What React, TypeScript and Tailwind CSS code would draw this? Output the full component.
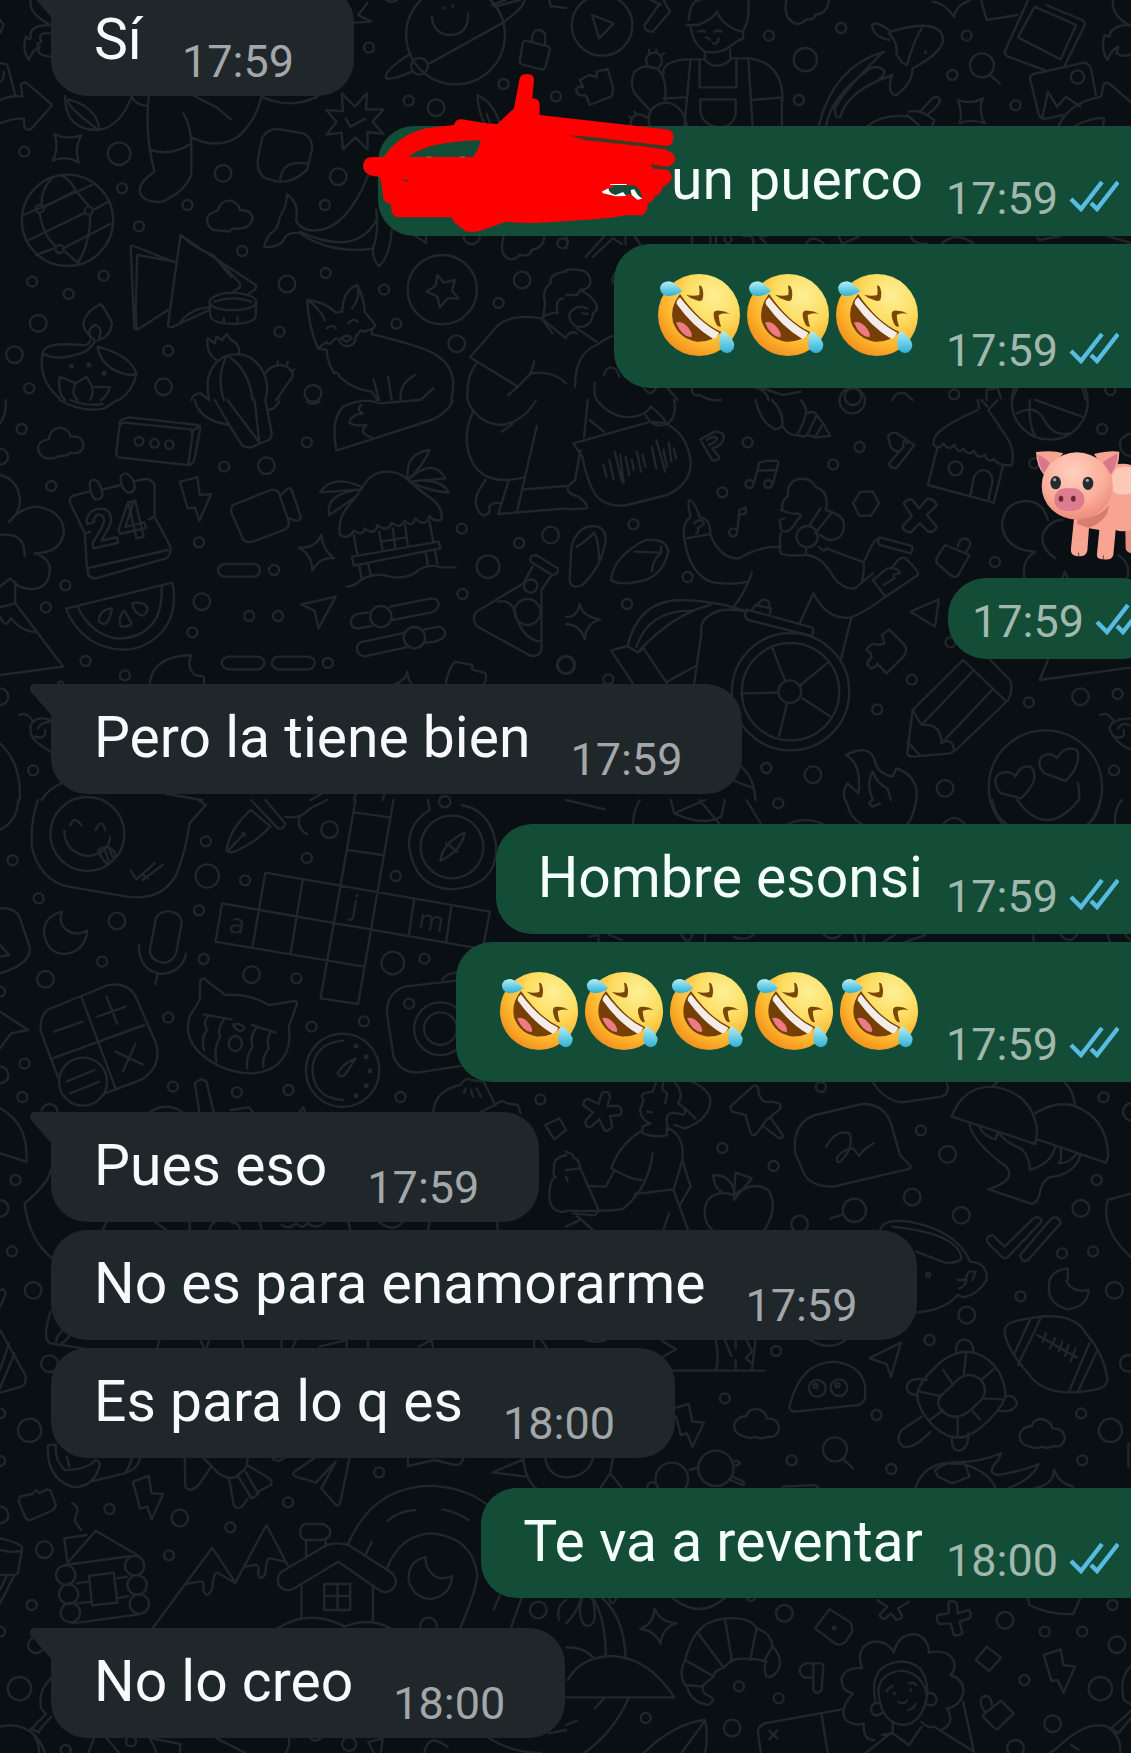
import type { ReactNode } from 'react'
import { clsx } from 'clsx'

type Dot = [x: number, y: number, r: number]

interface Sheet {
  x: number
  y: number
  dots: Dot[]
  lines: string
}

// The wallpaper is drawn in eight sheets, each on its own finer grid
const GRID_X = 2.77
const GRID_Y = 3

const sheets: Sheet[] = [
  {
    x: 0,
    y: 0,
    dots: [
      [1022, 143, 18], [1132, 302, 18], [1208, 323, 28], [1395, 252, 18], [1540, 289, 18], [67, 455, 18],
      [330, 461, 37], [338, 565, 18], [618, 520, 28], [519, 615, 18], [385, 679, 18], [937, 530, 28],
      [900, 615, 18], [671, 753, 18], [902, 819, 18], [795, 852, 28], [1064, 869, 18], [1098, 971, 18],
      [1265, 1031, 28], [89, 845, 18], [190, 882, 18], [287, 827, 18], [106, 970, 28], [40, 1064, 28],
      [81, 1165, 18], [453, 1160, 28], [466, 1052, 18], [774, 995, 18], [867, 1180, 28], [1446, 840, 28],
      [1381, 909, 18], [1558, 730, 18], [1307, 707, 28], [110, 626, 15], [246, 632, 15], [165, 747, 15],
      [187, 661, 140], [1262, 105, 151], [1162, 199, 28], [1225, 869, 107], [1228, 24, 5], [1254, 18, 5],
      [198, 1099, 7], [246, 1094, 7], [288, 1120, 7],
    ],
    lines: `M1196 50Q1200 105 1250 105Q1300 100 1296 40M1138 160Q1060 215 1070 235Q1090 240 1140 215M1190 190L1390 70Q1450 25 1453 0M1362 15L1400 0M1370 20L1440 0
M1454 122L1515 138Q1525 142 1523 150L1511 200Q1508 210 1498 208L1448 194Q1438 190 1440 180L1448 128ZM1474 122V108Q1480 88 1494 90Q1512 95 1510 112V132
M140 75Q80 75 85 110Q85 125 72 110Q60 150 80 180Q90 150 110 140Q95 165 140 170M140 100Q100 95 115 125Q95 130 110 140
M85 0Q78 40 140 75M0 60L10 75L0 100M0 190Q20 190 22 200L42 285M0 245Q12 240 10 215
M0 300Q30 285 62 290L58 255Q62 245 75 250L140 310Q145 316 138 324L85 388Q75 392 68 382L66 355Q30 355 0 370
M180 288Q180 390 270 390Q330 385 365 290M190 298Q265 320 275 385M190 298Q175 310 270 388
M412 288Q400 400 428 515Q380 550 388 580Q400 610 450 605Q520 570 530 520V440Q530 380 508 340M420 450Q470 470 528 432M530 412Q600 450 660 410Q710 360 724 290M538 288L600 322L640 358M725 290Q800 330 880 290M365 290Q375 315 408 318
M150 403Q185 420 225 406Q205 445 218 488Q185 465 146 482Q165 440 150 403Z
M947 280L983 320L1016 280L1014 328L1062 328L1032 365L1062 402L1018 396V448L984 412L950 448L946 398L904 404L932 366L904 330L950 334ZM958 355L970 380L1012 356
M770 387L840 400Q868 415 864 450L850 510Q810 550 770 545L735 535Q712 520 714 480L726 415Q740 385 770 387ZM776 540Q780 480 850 490
M1322 285Q1370 310 1385 375M1322 285Q1325 340 1345 375M1348 342L1358 372
M66 645L255 555M125 620L210 572L246 618M80 720L232 640M262 628L300 605M175 745L305 672M110 640Q120 710 155 738M115 612Q115 560 150 530M210 572Q190 530 165 525M250 648Q250 730 215 790M100 765L150 745M180 755L220 792
M590 690Q565 670 578 645Q590 635 603 632Q610 600 640 602Q662 610 664 630Q698 630 700 655Q690 690 655 685Q640 685 635 695Q605 690 590 690Z
M1020 525Q960 690 870 692Q830 690 820 660Q830 610 795 583Q795 620 775 650Q770 690 750 700Q735 720 732 740Q780 745 790 710Q805 695 830 700Q920 765 1035 745M830 695Q940 750 1000 710Q1030 690 1042 660M1042 628Q1050 700 1034 740Q1030 780 1050 798Q1080 770 1085 690M1150 708L1180 728V708
M362 742Q360 736 370 738L480 785M362 742L372 985Q375 992 385 986L465 930M380 765L483 785M380 765L376 930L378 985M500 706L708 855Q712 862 705 870L690 880M500 706L465 975Q468 985 480 980L580 930M505 708Q530 740 590 765L665 850V862L640 880M590 765L640 830M500 965Q530 925 578 922
M580 905Q590 880 645 878Q710 885 710 905Q705 930 645 930Q585 930 580 905ZM580 905L583 950Q590 970 645 972Q700 970 708 950L710 905M595 905Q645 885 697 905M620 955V968M658 952V965
M262 1020Q225 990 232 965Q240 930 280 912Q310 960 310 975Q305 1010 270 1022M250 1010Q240 985 265 975Q285 985 275 1015M250 1020Q245 1040 225 1035Q120 1025 118 1060Q150 1085 225 1060Q250 1050 262 1025M270 1040Q360 1065 378 1120Q370 1130 340 1120Q280 1100 270 1040M118 1060Q105 1140 165 1195M378 1120Q370 1170 330 1200M165 1130L210 1150L240 1130L255 1160L305 1162Q295 1190 280 1200M165 1130Q160 1180 180 1200M210 1150Q195 1180 215 1200M255 1160Q260 1180 250 1200
M600 1080Q570 1060 575 1015L595 1030L600 1010L615 1020L628 1002L640 1020Q665 1030 662 1060M580 1200Q560 1110 620 1070Q700 1040 735 1130Q745 1170 735 1200M625 1075Q600 1130 620 1200M635 1070Q690 1110 700 1200M735 1120Q750 1095 780 1095Q815 1105 810 1130L765 1200M768 1095L770 1085M795 1097L797 1085M808 1115L815 1108M530 1200Q535 1180 555 1180L580 1200
M880 1045Q850 960 852 900Q900 905 930 938L948 935Q950 870 990 855Q1010 900 1010 935L1040 975L1030 990V1003Q1180 1040 1215 1070Q1270 1110 1250 1200M852 900Q890 930 900 962M990 860Q1000 890 975 925M880 1045L905 1025Q910 1040 925 1020Q930 1010 940 1020Q945 1040 965 1038Q985 1035 985 1010L1000 990L1010 995L1035 985M905 985Q920 970 930 985M965 970Q980 950 990 965M945 1015Q960 1000 975 1015L960 1025ZM880 1045L905 1050Q905 1080 925 1120Q935 1110 940 1130Q980 1170 1030 1175L1045 1200M1035 1140L1050 1200M1075 1130L1085 1200M1110 1200Q1105 1150 1150 1125M1165 1200L1200 1165
M1530 1000L1500 955Q1420 940 1380 975L1302 1072L1435 1160L1470 1120L1480 1085M1320 1090Q1290 1130 1295 1200M1435 1160L1408 1185M1470 1120Q1530 1110 1568 1150
M1568 815Q1520 820 1525 850Q1500 870 1510 910L1505 950Q1530 935 1545 940Q1535 900 1560 895M1500 955L1568 1015
M1212 826L1230 848L1260 840L1252 872L1270 895L1240 895L1218 922L1212 890L1182 875L1206 858Z
M1018 8L992 45L1028 65L980 68M1522 0L1525 18L1568 24M1070 0Q1085 10 1100 0M1395 710Q1380 770 1415 778Q1430 778 1438 765Q1470 770 1472 750Q1505 745 1508 710`,
  },
  {
    x: 566,
    y: 0,
    dots: [
      [100, 76, 94], [562, 107, 18], [663, 179, 38], [762, 84, 18], [1110, 107, 18], [1070, 225, 18],
      [645, 300, 18], [1245, 316, 18], [1152, 196, 39], [1417, 231, 23], [996, 157, 5], [1075, 1183, 18],
      [795, 1190, 28], [1508, 1170, 18], [244, 182, 27],
    ],
    lines: `M72 45L132 70L92 115Z
M218 75L260 10M240 95L288 35L270 0M218 75Q215 95 240 95M235 0L262 15
M340 60Q345 0 370 0M505 0Q510 60 490 95M333 75H365Q405 60 418 35Q440 85 490 95M345 80Q350 130 385 155Q430 165 465 130L480 120Q495 120 490 95M365 95Q375 90 385 95M410 95Q420 88 430 95M388 112Q400 115 398 120M408 130Q420 135 423 115M385 158V180Q415 215 455 180V150M385 178H330Q265 185 270 220M455 175H510Q600 190 600 300M345 178L328 378M370 182V262H472V178M505 180L517 378M372 298H470V340Q465 380 425 382Q375 375 372 330ZM270 295L330 292M515 300L600 292M598 300V378
M232 330L190 280Q175 245 190 215Q215 190 250 205Q280 225 275 300M230 345Q240 310 280 308Q325 315 335 378M232 378Q225 355 232 340M178 378Q180 345 200 342Q215 345 228 355M232 160L230 150M250 155V148M265 165L272 160M175 350L182 355M190 335L195 345
M65 225L85 232V215L115 207L130 260Q132 280 125 290L65 315L55 285Q30 290 28 270Q32 255 48 262L38 240Z
M610 0Q600 60 640 72Q655 70 665 58Q690 60 690 45Q725 40 728 0
M895 120Q850 110 848 75Q860 60 900 95Q1040 50 1045 120Q1040 160 960 205Q960 250 915 285Q890 285 900 235L905 225Q780 270 760 350Q745 360 745 325Q770 270 880 155Q740 200 700 378M720 378Q735 290 830 215Q860 190 880 210Q885 225 870 235M895 100Q920 130 915 160Q930 195 945 195Q960 130 985 85
M1015 5Q1050 10 1075 50Q1080 15 1120 0M1150 0L1165 60L1250 45
M1280 0L1215 155Q1215 165 1225 170L1325 210M1380 200L1437 75Q1437 65 1430 60L1330 15M1298 20L1413 75L1370 178L1252 112ZM1285 235Q1285 225 1295 222L1435 188Q1450 190 1455 210L1468 285M1285 235L1310 345Q1315 360 1335 355L1375 345M1320 350L1335 275L1360 320L1385 290L1425 320
M1365 378Q1390 310 1482 290L1490 250Q1500 245 1510 255L1568 310M1410 378Q1460 350 1490 355L1488 378M1178 228L1202 250
M1085 300Q1120 315 1155 295Q1140 330 1160 370Q1120 355 1090 370Q1100 340 1085 300Z
M835 378Q880 340 950 350M950 335Q980 325 1020 360L1015 378M945 345L980 378M985 330L1015 295Q1030 285 1037 300Q1035 315 1000 345
M1560 75Q1510 75 1505 110L1492 105Q1480 150 1500 180Q1510 150 1530 140L1525 160Q1550 175 1568 160M1515 0Q1510 50 1568 80
M55 770L105 710M75 770L130 715L155 732M165 708V732M190 708L205 732M350 708Q345 720 350 732M400 708V732M415 708V732M440 710Q435 725 450 730Q465 720 455 710M490 708H515L520 732M555 708H535L555 732M665 732Q680 700 715 732M755 708L765 732L810 710M955 708Q960 732 1000 732M1040 732Q1080 690 1130 732M1305 708L1310 720L1370 708M1500 708L1568 730M0 710Q10 720 0 745
M0 810Q70 800 68 850Q60 870 40 870L30 885H0M40 870Q90 900 85 930L75 940Q70 985 30 980Q5 965 10 940Q30 910 60 925M45 940L60 942M30 985L85 1025M25 1160Q25 1060 85 1035Q130 1000 140 1010M0 1010Q15 990 30 1000M105 1125Q115 1090 140 1110L148 1130M85 1200Q75 1180 80 1150M130 850Q125 830 135 820
M215 1163Q235 1195 250 1163M280 1163L310 1200M350 1163Q345 1190 370 1185Q400 1205 430 1200M525 1163Q560 1175 560 1200M540 1163L600 1185L650 1175M905 1200Q910 1175 940 1180L960 1200M1165 1200V1170L1195 1163L1205 1195M1235 1200Q1245 1175 1250 1163M1430 1163L1440 1200`,
  },
  {
    x: 0,
    y: 400,
    dots: [
      [60, 87, 18], [142, 258, 18], [621, 200, 18], [738, 197, 28], [850, 127, 18], [551, 427, 18],
      [759, 510, 18], [181, 556, 18], [127, 622, 18], [559, 605, 28], [533, 697, 18], [690, 648, 18],
      [770, 648, 18], [237, 783, 18], [346, 826, 18], [908, 789, 18], [1279, 386, 18], [1438, 429, 18],
      [1525, 405, 28], [1352, 500, 37], [1281, 582, 18], [385, 124, 16], [428, 130, 16], [469, 134, 16],
      [92, 1111, 18], [0, 170, 27], [0, 890, 28], [1568, 795, 30], [1055, 650, 35], [1148, 713, 35],
      [1470, 558, 23], [1461, 636, 42], [168, 852, 10],
    ],
    lines: `M15 0Q20 40 0 70M165 0Q230 40 290 25L325 0M195 0Q240 20 285 12
M130 175Q100 165 107 135Q115 120 135 118Q140 85 165 83Q195 90 195 110Q230 105 231 135Q228 165 195 158Q185 170 165 168Q150 178 130 175Z
M330 70Q335 55 360 52L548 75Q557 80 553 95L540 170Q535 195 520 195L330 172Q320 168 322 158L330 85Q332 68 345 68L530 88Q535 90 533 105L522 190M530 95L553 78
M540 0Q550 60 635 75L595 0M630 0L720 130M635 75L670 135Q690 150 710 135L745 120Q755 110 752 95L735 0M705 0L718 125M775 0Q765 25 745 30M850 5Q865 18 885 5
M932 152Q915 60 950 20Q1010 -10 1050 10L1160 0M932 152L1195 60Q1240 40 1255 0M1000 15Q985 30 1005 40Q970 45 968 68Q980 80 1015 75Q990 100 1030 112
M1295 0Q1320 70 1390 75Q1450 65 1485 0M1390 95L1420 72M1310 35Q1275 120 1310 190Q1350 260 1450 232M1487 78L1432 335M1408 245L1380 342L1568 325M1450 268L1568 258M1345 240Q1310 290 1320 320Q1330 350 1345 345Q1360 340 1355 320Q1365 305 1385 310
M245 275L200 288Q190 295 195 310L235 400L240 490L245 525Q255 540 275 532L460 475Q475 465 472 440L428 350V255Q420 235 400 237L375 243M280 270L335 255M235 400L250 395M412 358L428 350M240 505L465 450M250 265Q245 240 260 238Q280 245 284 285Q280 300 265 298Q252 290 250 265ZM335 245Q330 222 348 220Q368 225 374 262Q370 278 355 278Q340 270 335 245Z
M498 245L547 232L553 285L585 282L552 362L540 322L520 325Z
M645 315L750 270Q765 267 772 278L800 365Q802 380 790 388L700 425Q680 430 672 415L640 335Q640 320 645 315ZM778 285L798 265Q805 262 808 270L833 350Q833 362 820 362L800 355
M890 405Q895 450 925 475Q885 470 865 512Q865 465 828 443Q875 445 890 405Z
M1005 260Q1030 215 1070 215Q1110 215 1130 240Q1160 270 1200 300Q1230 330 1222 360Q1200 365 1190 348Q1180 385 1150 355Q1145 385 1120 362Q1110 390 1085 368Q1075 400 1045 375Q1040 410 1010 385Q1005 410 980 392Q965 420 942 405Q935 360 960 325Q985 295 1005 260M1005 262Q920 220 887 277L1000 268Q900 280 912 345Q960 310 985 290M1130 240Q1120 160 1190 150Q1170 200 1130 240Q1200 170 1233 235L1135 245Q1220 230 1243 278Q1190 275 1135 245M980 405L990 465M1190 365L1200 425M975 470L1215 425L1220 445L980 497ZM1050 395L1060 450M1122 375L1130 440M1088 385L1095 445M1055 425L1125 412M995 497L1002 535M1020 492L1027 525M1180 460L1185 495M1205 455L1212 492M960 560Q980 560 1000 540Q1040 515 1080 530Q1130 540 1160 510Q1190 490 1220 502H1262
M622 492H705Q720 495 720 510Q718 528 705 530H620Q604 525 604 510Q606 495 622 492ZM632 770H715Q733 775 733 789Q730 805 715 808H632Q614 802 614 789Q616 773 632 770ZM770 770H855Q872 775 872 789Q870 805 855 808H770Q753 802 753 789Q755 773 770 770Z
M183 626L478 548Q500 680 400 735Q330 770 250 720Q200 680 183 626ZM215 620Q250 700 320 715Q400 720 435 650Q450 610 448 558M305 625Q270 635 275 665Q300 690 310 625M342 632Q325 660 335 680Q370 680 362 665Q350 640 342 632M367 610Q370 640 395 647Q420 630 400 612Q380 605 367 610
M835 613L930 590L882 685L872 633Z
M1020 637L990 642Q970 650 972 670Q978 690 1000 684L1028 678M1080 620L1195 595Q1215 595 1215 615Q1212 632 1195 637L1088 660M1115 700L1005 725Q985 730 990 755Q1000 772 1015 768L1125 742M1175 688L1215 680Q1235 685 1233 705Q1225 725 1180 728
M1470 485Q1465 465 1485 465L1545 505Q1548 525 1530 525ZM1475 500L1450 550L1320 635Q1305 655 1320 678L1465 765Q1490 775 1500 750V570L1528 525M1380 605Q1420 595 1430 650Q1450 720 1500 725
M0 225Q55 240 55 310Q50 345 25 365Q60 320 105 320Q175 335 177 395Q170 460 95 460Q145 475 137 520Q130 570 80 567Q50 565 28 535L0 560M0 405Q70 395 68 468M42 545V610L175 800L0 825M42 610L0 622M0 650Q15 690 30 655Q60 695 98 697
M415 852Q420 770 530 765Q515 800 540 825L565 830V852M1095 852Q1125 840 1128 815Q1130 840 1140 852M1235 852Q1240 810 1260 785L1308 795V808L1345 820Q1350 840 1340 852
M52 945Q75 935 88 960M140 960Q100 945 85 975Q80 1010 105 1030L140 1055M105 985Q115 965 140 965M95 1010Q130 1020 125 990M0 1030Q60 1090 55 1200M115 1200Q135 1165 170 1150M460 1182L560 1200M860 1200L890 1182M980 1200L985 1182M1060 1200L1065 1182`,
  },
  {
    x: 566,
    y: 400,
    dots: [
      [503, 127, 18], [433, 277, 18], [187, 373, 18], [169, 612, 18], [337, 531, 18], [813, 141, 18],
      [740, 193, 18], [1079, 205, 24], [1188, 486, 18], [958, 839, 18], [862, 928, 18], [555, 1104, 18],
      [684, 1124, 28], [1050, 1165, 28], [1282, 907, 18], [1425, 890, 28], [1528, 882, 18], [1485, 87, 18],
      [117, 838, 18], [0, 795, 28], [1297, 190, 18], [620, 875, 37], [622, 875, 179], [622, 875, 149],
      [668, 410, 35], [1065, 727, 18], [1518, 1111, 18], [1340, 5, 117], [1328, 1161, 173], [793, 2, 41],
      [508, 252, 15], [560, 252, 15], [463, 397, 15],
    ],
    lines: `M60 0Q55 60 50 110M20 130L45 170Q60 250 85 290Q120 325 170 315L280 285Q350 250 345 180Q335 100 275 70L235 65L20 130M65 60L105 95M85 0Q130 60 190 50Q220 45 235 20M300 0Q310 70 260 77Q235 75 220 45M235 20Q270 50 275 65
M104 195L112 232M120 180L132 238M135 155L155 245M150 165L160 250M165 170L175 225M182 178L188 210M196 155L208 215M212 165L220 200M238 142L250 205M250 120L275 215M270 150L280 200M285 128L292 185M298 145L305 175
M40 150L25 240L5 260Q0 280 35 290Q60 310 58 325L0 328
M372 118L412 95Q440 95 437 115Q430 140 405 145L425 172Q420 185 405 180L375 125M390 120Q410 105 418 115Q420 125 395 135
M525 0Q540 70 580 88Q600 85 600 70Q600 30 570 0M600 80Q620 110 640 105Q665 60 665 30Q660 10 650 0M640 105Q665 115 670 100L695 45Q690 30 668 40M670 105L690 112L712 70L698 50M690 112L732 108L712 70
M520 250L535 190Q540 182 585 182L588 190L573 250M530 212L585 210M475 390L480 330L498 322V340L480 345
M895 120Q885 100 915 98L930 110L965 135L915 205Q895 205 895 190L935 140Q930 115 945 130M895 120Q895 150 920 155
M815 275H850L867 310L845 347H812L795 310Z
M935 310Q945 295 960 300L978 325L1000 297Q1020 295 1027 315L1000 345L1027 380Q1020 400 1003 395L980 370L955 397Q935 395 932 380L958 348Z
M1140 30Q1060 70 1040 90Q1015 110 1018 135Q1035 150 1045 130Q1060 155 1075 135Q1090 165 1100 145Q1115 170 1130 152Q1140 180 1160 165Q1170 190 1185 178Q1200 200 1235 195Q1245 150 1220 110L1170 30M1030 140L1002 255L1185 308L1210 200M1120 290L1130 230Q1145 205 1165 212Q1185 225 1180 250L1170 300M1140 0L1145 25M1195 0L1170 30M1150 0L1168 20
M1285 0Q1280 70 1300 110M1300 0L1430 50M1250 40Q1300 10 1325 60Q1350 110 1390 100M1568 100Q1530 110 1535 140Q1540 165 1568 170
M1335 360Q1320 300 1270 303Q1210 310 1208 380Q1220 450 1300 455Q1260 480 1270 534M1355 475Q1310 440 1322 400Q1340 360 1375 360M1375 534L1382 515L1390 534M1530 465Q1565 490 1555 534
M15 440Q30 380 75 378Q110 380 110 420Q100 500 45 555Q15 570 10 540ZM30 440Q60 420 78 398Q90 420 92 480M125 540Q130 470 220 420Q280 415 283 455Q270 520 220 540Q150 560 125 540ZM190 455L263 458Q240 480 238 515M263 440V458
M328 420Q320 370 345 350Q335 305 342 300Q360 310 370 352Q400 355 400 400M335 415L395 403M355 370Q375 350 382 372L365 385Q370 395 360 400M328 420Q345 530 410 548Q470 555 500 545M400 405Q430 480 480 475Q530 440 590 440M515 518Q500 570 462 625M590 440L595 460Q610 470 665 465M668 465Q710 470 740 530Q770 570 800 565L850 520M665 445V465M595 440Q590 420 595 400M600 330Q595 300 615 290Q610 250 640 238Q680 230 690 260Q730 275 720 325M595 330Q630 345 640 340Q660 345 640 360Q630 385 610 395Q590 395 595 375Q585 360 605 355M705 325L675 375M735 340L690 400M720 330Q770 345 770 375Q770 415 735 420Q720 420 705 405M700 440Q715 460 720 445L820 485Q830 490 820 545M825 485L850 430Q860 415 870 412L955 437Q965 440 955 460L870 435Q860 430 868 415M850 540L885 590L975 525Q980 515 940 475Q930 470 920 480L905 500M850 540L890 505Q920 500 925 520Q900 520 910 535L880 555M885 590Q800 660 770 653Q720 650 685 580L648 668M790 655L762 775
M0 650Q30 655 38 612Q45 650 95 658Q55 670 52 718Q40 675 0 672
M500 628L680 682Q690 690 680 708L505 660Q490 650 500 628ZM515 630L525 615L568 625L565 640M530 615Q540 595 555 600Q570 610 560 625M500 635Q430 620 400 645Q370 660 375 700L355 850M170 740Q200 600 320 600Q430 605 500 635M195 740Q230 630 350 632M200 755Q300 640 400 615M125 752L170 738L200 758L215 745M125 752L185 850M215 745L280 850M280 845L360 798
M572 745L608 845M725 788L650 855M735 952L655 895M590 1008L612 910M485 880L588 878
M1033 598L955 635L1022 680Z
M865 735Q845 725 832 750Q850 760 845 775Q825 790 845 805Q865 800 862 790L888 820L935 770Q948 750 938 735L895 688L875 705L882 730Z
M1050 435L1118 465L1085 528Q1075 535 1065 525L1028 490Q1022 480 1030 468ZM1085 440Q1090 415 1105 415Q1125 420 1118 440L1105 460
M1100 780L960 930L945 1062Q950 1070 960 1070L1065 1060L1080 1050L1225 900Q1240 870 1230 840L1175 780M1130 810L985 975L960 930M1180 870L1040 1030Q1040 970 985 975M1040 1030Q1070 1010 1075 1050M1100 780L1220 905M945 1025L980 1065M1335 780L1312 840L1568 802
M775 1065Q840 1030 855 1080Q860 1120 905 1130L915 1105Q980 1130 970 1200M775 1065Q820 1090 810 1180L780 1150Q765 1170 772 1200M850 1200Q830 1150 850 1115Q860 1150 890 1165L900 1200
M1245 1130Q1260 1090 1290 1103Q1315 1140 1260 1195L1205 1180Q1180 1150 1195 1125Q1225 1105 1245 1130ZM1360 1075Q1380 1035 1415 1050Q1430 1090 1385 1143L1325 1120Q1300 1090 1320 1068Q1345 1055 1360 1075ZM1418 1150Q1425 1180 1420 1200
M1480 945Q1500 935 1515 960M1568 955Q1510 955 1505 985Q1520 1030 1568 1050M1530 985Q1540 965 1560 975M1520 1010Q1550 1020 1545 990M485 1100Q520 1130 525 1200M460 1140L520 1165`,
  },
  {
    x: 0,
    y: 800,
    dots: [
      [242, 102, 114], [35, 181, 18], [107, 295, 18], [324, 363, 28], [574, 228, 38], [570, 124, 18],
      [679, 241, 18], [850, 174, 18], [913, 89, 28], [1096, 228, 18], [551, 331, 18], [564, 477, 18],
      [283, 485, 18], [126, 538, 28], [697, 524, 28], [821, 535, 18], [1088, 489, 37], [1176, 476, 18],
      [466, 653, 18], [863, 680, 18], [1008, 664, 18], [68, 791, 18], [62, 891, 18], [479, 860, 18],
      [656, 877, 18], [799, 870, 18], [1109, 891, 18], [1133, 611, 18], [1497, 898, 18], [0, 575, 18],
      [0, 825, 28], [43, 1140, 18], [0, 1225, 28], [33, 1354, 18], [949, 811, 113], [1220, 686, 82],
      [1220, 686, 52], [1252, 141, 97], [230, 845, 75], [986, 738, 7], [1014, 770, 7], [1025, 812, 7],
      [1014, 857, 7], [986, 887, 7], [1232, 5, 20], [675, 103, 7],
    ],
    lines: `M1190 30Q1130 70 1133 140Q1150 265 1252 268Q1370 260 1375 150Q1370 60 1310 25M1190 30L1185 0M1280 15L1310 25M1287 98Q1280 150 1220 183Q1225 130 1287 98ZM1235 130L1268 155
M195 75Q205 45 225 75M265 90Q280 50 292 90M178 92Q180 160 245 168Q300 160 305 112M272 150Q300 130 320 160Q320 185 295 190Q280 175 272 150M290 148L300 180M300 140L312 170
M105 0Q85 60 88 140Q110 240 190 260L350 290Q450 305 490 220Q515 150 525 70L570 15L550 0M362 212L378 238L428 190M395 240L450 195M398 225L410 235M0 90Q50 60 50 0
M695 30Q640 80 627 150Q635 160 650 155Q720 120 748 78M630 155L672 105M695 0L770 85Q785 90 790 70L735 0M695 30L750 80M790 50Q830 60 860 25L905 0M830 50Q820 85 850 102
M985 0L888 595L992 612L1090 0M985 38L1080 52M963 150L1060 165M735 218L1357 335M615 310L1310 442M597 425L1008 500M615 310L597 425M735 218L700 437M838 243L805 460M1147 300L1132 408M1250 322L1235 430M1357 335L1340 430
M172 335Q120 350 122 400Q130 460 180 462Q235 455 242 392Q210 410 185 390Q160 370 172 335Z
M432 355Q445 330 475 335Q505 345 503 370L488 460Q475 490 450 488Q415 480 415 450ZM385 435Q385 515 450 522Q505 515 515 462M437 522L430 552
M0 325Q50 320 60 370L82 440Q90 490 0 520M0 435L25 465L0 470M0 635L78 690L30 700L0 745
M130 630L300 555Q360 545 380 600L432 730Q450 800 390 840L290 880M130 630Q105 660 115 700L160 830M225 590L320 865M145 775L400 675M270 650L348 620M295 590L325 672M150 695L228 665M320 755L395 793M375 732L340 815M185 845L262 810M195 880L275 845
M553 600L555 540Q565 530 575 545L625 585Q690 580 745 615L815 603Q825 605 822 615L800 680Q810 760 760 800Q700 840 610 800Q500 740 525 650ZM565 643L640 658M698 675L763 698M575 650Q560 670 575 690Q555 710 565 750M620 660Q600 690 610 710Q590 750 600 785M710 685Q690 710 700 740Q680 770 685 805M750 695Q735 720 745 745Q725 770 730 800M645 675Q665 665 678 685Q665 705 645 675M655 708Q630 710 635 740Q655 770 670 735Q672 715 655 708
M950 722Q870 730 865 810Q870 895 950 900M985 775Q950 790 935 820Q940 835 955 825Z
M1265 542L1120 560Q1070 580 1072 640L1090 770Q1110 820 1160 817L1275 798M1225 540Q1235 520 1265 518
M540 850Q555 830 572 845L592 936M540 850L552 936M115 930Q130 900 155 920L160 936M415 936Q460 905 505 936M640 930L690 922L700 936M830 936L840 922L845 936M1200 936Q1205 870 1275 855Q1290 830 1305 840L1340 845L1372 915M1372 915Q1390 895 1405 910L1435 915L1442 940M1372 915L1330 936M1290 865L1285 880M1305 870L1310 890M1320 865L1332 890
M0 925Q80 970 73 1085L0 1060M140 1110Q135 1150 68 1210Q80 1320 145 1375
M1510 975L1550 955L1568 990L1535 1018ZM1568 1065Q1530 1075 1535 1100Q1530 1130 1540 1130Q1520 1140 1522 1200Q1530 1240 1568 1235
M285 1290L295 1266M430 1266L460 1290M525 1266V1290M580 1290Q585 1270 595 1266M640 1266Q665 1270 665 1290M720 1266L725 1290M780 1275Q800 1290 820 1270Q840 1290 850 1270Q880 1290 900 1266M965 1266L970 1290M1050 1266Q1090 1300 1115 1266M1185 1290L1190 1266M1378 1290V1266`,
  },
  {
    x: 566,
    y: 800,
    dots: [
      [588, 10, 18], [706, 861, 18], [983, 991, 18], [433, 1044, 18], [575, 1098, 18], [1057, 1063, 28],
      [959, 1191, 28], [1095, 1246, 28], [1426, 1225, 28], [1470, 1140, 18], [1374, 1360, 18], [1460, 1354, 18],
      [1489, 892, 18], [799, 1231, 38], [1003, 1425, 9], [1568, 935, 30], [647, 1272, 28],
    ],
    lines: `M0 0L108 28M185 72Q190 20 205 0M290 0L300 40L385 0M300 40Q380 80 430 50L440 0M500 0L540 72M370 0L425 72M775 0Q790 60 820 72M850 0Q830 10 850 20L870 10M970 0Q960 60 945 72M1180 0Q1190 50 1220 72M1250 0Q1330 120 1420 0M1480 0Q1475 50 1445 72M1520 72Q1520 20 1540 0M615 72Q660 50 710 70M1045 72Q1075 35 1105 72
M65 410L90 405V426M120 405L155 420M320 405Q340 440 350 405M385 405V426M465 410Q490 425 520 405M715 405Q740 425 760 405M800 405L805 426M825 426V405M880 426L910 405M940 426L995 405M1295 405V426M1370 405Q1395 435 1415 405M1500 405Q1505 426 1510 426M1550 405L1568 426
M100 878Q120 870 122 890L115 918L145 918Q160 930 150 945L122 948L128 980Q115 1000 105 988L92 958L70 980Q50 985 55 960L75 938L48 915Q50 890 68 900L90 912Z
M250 846L240 875L215 880Q205 890 215 900L205 930Q210 965 235 970L212 980V1000Q250 1015 280 1005L278 985M300 846Q330 880 310 910Q340 930 325 945Q290 930 280 950Q275 970 285 990M270 850Q260 870 280 880L275 910M350 846Q400 870 400 905Q395 960 330 985L300 975M330 925L358 955M225 935L238 937M212 990Q150 1030 125 1105L135 1110Q180 1140 210 1140M285 985Q330 1010 322 1080L298 1170L338 1290M240 1060Q230 1160 160 1225Q140 1235 0 1232M190 1182L298 1168M322 1080L345 1160L315 1215M135 1110L110 1160L60 1158M40 1105L90 1230Q85 1250 70 1245L20 1240M0 1055Q20 1060 20 1072Q40 1080 38 1105L0 1110M0 1130L5 1145M285 1240L270 1290M30 1248L75 1290M0 1280L35 1262
M455 920L520 857Q530 855 532 865L535 885Q545 912 570 905L590 910Q598 920 590 930L555 960L525 1005Q515 1005 512 1000L497 945L460 935ZM548 980L590 1015Q600 1015 600 1005L568 955
M465 1185Q410 1165 388 1210Q375 1260 405 1290M465 1185Q520 1140 560 1170Q590 1220 550 1290M465 1200Q465 1180 470 1118L515 1135L465 1200M465 1170Q455 1125 408 1125Q410 1165 430 1175
M690 945L820 912Q880 910 900 970L925 1065L955 1098Q955 1108 945 1108L740 1160Q670 1160 655 1110L635 1060Q625 970 690 945ZM720 1040Q750 985 785 1000Q800 1040 760 1085Q745 1090 752 1070Q770 1045 795 1045L812 1068Q820 1050 852 1030
M850 846Q880 900 930 907L1040 890Q1065 880 1055 850
M1068 950Q1100 860 1180 860Q1290 875 1305 990L1300 1032L1068 950ZM1300 940Q1350 905 1400 915Q1500 950 1502 1070L1495 1088L1305 1018M1118 975Q1130 1030 1220 1100Q1250 1140 1170 1168L1285 1210Q1300 1215 1310 1190Q1320 1130 1350 1130Q1410 1120 1425 1065M1200 1000Q1220 1030 1260 1045Q1285 1070 1285 1110Q1345 1090 1355 1040M1145 982Q1160 1010 1190 1018L1195 1000M1370 1045Q1375 1075 1365 1090Q1395 1090 1415 1060M1180 860L1195 846M1380 846Q1405 870 1410 915
M767 1243L732 1256M1170 1310Q1185 1300 1195 1320L1215 1340L1295 1255Q1315 1245 1317 1265L1225 1370Q1215 1380 1205 1368L1170 1330Q1162 1318 1170 1310ZM1258 1365L1345 1255Q1365 1245 1370 1270L1280 1380Q1262 1390 1258 1365Z
M870 1290Q880 1255 950 1265Q1080 1290 1120 1385Q1170 1390 1165 1440M905 1280Q1080 1300 1095 1370Q1095 1390 1050 1388L970 1355M1105 1440L1115 1415H1135L1125 1440M1340 1440Q1350 1410 1390 1405V1440M1568 1180L1500 1200Q1480 1290 1568 1375`,
  },
  {
    x: 0,
    y: 1280,
    dots: [
      [92, 31, 28], [137, 251, 28], [82, 451, 38], [0, 400, 18], [0, 543, 18], [303, 687, 18],
      [498, 714, 28], [638, 742, 18], [798, 667, 18], [1050, 577, 18], [468, 826, 18], [123, 809, 28],
      [88, 975, 18], [0, 1055, 18], [54, 1226, 38], [1187, 1038, 28], [1491, 990, 28], [0, 705, 28],
      [363, 1384, 18], [182, 1410, 18], [967, 1392, 24], [100, 1095, 27], [182, 885, 32], [190, 943, 32],
      [195, 998, 32], [373, 857, 32], [380, 915, 32], [386, 972, 32],
    ],
    lines: `M0 30Q30 20 0 80M0 150L70 285Q75 310 60 320L0 338M25 190L0 270M40 220L0 325M140 95Q115 180 140 190L230 205M155 185Q165 140 195 155Q190 180 170 190
M135 495H155Q150 540 180 570Q240 570 265 540Q280 545 275 560Q260 620 205 622Q130 600 132 500ZM185 530L192 560M250 605L345 580Q380 570 388 535M345 580Q360 560 365 535
M55 650L90 642L100 630L108 640L130 628L140 632L155 675L148 690L85 720Q75 722 70 712L52 665Z
M368 605L412 588L420 640L452 642L420 718L408 680L388 685Z
M512 535L513 620Q525 640 550 615L585 560M565 535L600 575Q640 610 665 580Q690 560 685 535M635 600L648 675Q655 690 670 680L685 658M658 588Q690 640 695 655Q710 650 715 640L680 575M685 555L745 595Q757 605 750 615L715 635M755 535Q770 550 785 535
M870 535L815 575Q808 585 820 590L875 608L930 545L890 625L930 675Q940 680 943 665L968 535
M1130 535V558L1205 540L1260 555Q1280 555 1283 535M1365 577L1450 538M1365 577L1455 590M1450 535Q1455 600 1485 624M1510 535Q1520 590 1568 592
M200 670Q215 675 215 695Q200 720 215 735L225 750M188 855L178 775L240 765M190 845L265 752L380 825M180 855L365 828M212 910L245 905M325 895L352 890M215 970L255 965M325 955L355 948M200 1030L385 1003M247 888L315 878L325 968L255 976Z
M0 775Q60 790 62 805L50 875Q50 882 40 885H0M0 810Q30 820 60 812M40 885L0 970M20 885L0 930
M423 1044L588 803L652 908L738 735L800 862M515 912L550 905Q570 900 562 930Q575 960 588 925Q592 870 605 880L650 908M680 860L705 855Q720 850 715 885Q725 905 735 880Q738 830 750 835L790 845
M780 875L905 795Q935 785 965 795L1085 878Q1105 900 1090 925Q1070 945 1050 930L937 845L815 925Q790 940 772 915Q765 890 780 875ZM835 920V1015M1033 920V1025M848 835V780M902 800V778M848 780Q828 775 832 750Q835 732 850 732H895Q915 740 915 760Q910 778 890 780ZM898 912H970V990H898ZM935 912V990M898 948H970M770 1044Q860 985 955 1040Q1020 1010 1080 1044
M963 795Q1030 620 1195 617Q1300 625 1355 680M1075 722Q1100 695 1150 690M1225 688Q1265 695 1298 720M1072 865Q1110 760 1200 760Q1310 775 1322 885Q1320 930 1275 1044M1012 825L1030 785M1385 945L1368 988M1445 953L1415 1044
M1180 832Q1130 840 1132 900Q1145 955 1195 957Q1250 945 1252 888Q1215 905 1195 880Q1175 855 1180 832Z
M140 1195Q110 1230 112 1265Q110 1290 128 1300L85 1350M142 1310L105 1355M85 1345L108 1358M0 1340Q60 1325 100 1370Q115 1390 125 1419M90 1358Q110 1390 108 1419M260 1375L245 1419M295 1375L330 1419M420 1375L500 1392L498 1419M415 1375L435 1419M600 1375L680 1419M800 1375Q805 1400 790 1419M860 1375Q870 1390 890 1375M1025 1385L1060 1375L1055 1419M1020 1385L1035 1419M1175 1419Q1185 1370 1215 1385L1240 1400M1355 1375Q1420 1419 1500 1419M1568 1350L1520 1360M1548 1019Q1540 980 1568 960
M435 204L442 180M555 180L565 204M572 204L580 180M670 180L675 204M780 204V180M810 204L820 180M885 200L960 180V204M1020 180V204M1160 200L1195 180L1200 204M1480 204V180M1500 180L1515 204`,
  },
  {
    x: 566,
    y: 1280,
    dots: [
      [1259, 49, 18], [1110, 105, 28], [1519, 31, 28], [1007, 180, 18], [582, 213, 18], [440, 355, 18],
      [860, 405, 18], [1427, 400, 18], [1508, 451, 38], [625, 541, 18], [901, 567, 18], [1430, 541, 18],
      [745, 508, 39], [696, 325, 28], [756, 323, 28], [293, 597, 52], [415, 565, 56], [605, 1000, 28],
      [1216, 1021, 28], [1326, 1055, 18], [1430, 1055, 18], [1514, 975, 18], [1526, 1094, 28], [1270, 1200, 18],
      [1480, 1226, 38], [1348, 1331, 28], [479, 1219, 18], [589, 1255, 18], [221, 1314, 18], [460, 1344, 28],
      [1245, 1405, 28], [743, 1044, 7], [910, 1240, 5], [955, 1230, 5], [1558, 250, 28], [691, 318, 9],
      [752, 315, 9],
    ],
    lines: `M972 97Q1050 90 1085 45L1100 52Q1140 45 1165 0M1085 0H1110Q1105 20 1090 25M1340 0Q1325 70 1390 88Q1445 80 1448 30Q1400 40 1385 0
M1215 150Q1220 130 1240 125Q1400 80 1440 160Q1490 220 1500 300Q1495 325 1470 328Q1330 360 1280 280Q1215 200 1215 150ZM1285 120L1240 225M1315 115L1252 255M1450 190L1395 330M1470 215L1420 330M1305 165L1415 232M1330 160L1320 185M1355 175L1340 205M1375 185L1365 215M1392 195L1382 228M1412 205L1398 243
M928 187L840 235L888 252L900 290Z
M1045 240Q1110 190 1170 240Q1215 280 1218 350Q1200 400 1140 450Q1080 500 1020 440Q965 380 975 330Q990 290 1045 240ZM1075 310Q1110 265 1150 300Q1175 340 1140 370Q1090 430 1050 400Q1015 370 1045 340ZM1045 270L1070 310M1108 220L1102 282M1185 268L1150 300M1210 358L1158 355M1148 420L1122 388M1085 465V408M1008 420L1045 390M980 335L1035 348M1080 215Q1080 180 1105 178Q1130 185 1128 215M975 345Q940 345 945 315Q955 290 1000 300M1215 350Q1240 340 1250 370Q1240 400 1195 392M1070 470Q1065 510 1090 512Q1115 505 1115 460M985 410L930 450Q910 480 935 500Q960 510 1010 455
M620 375Q650 245 745 245Q840 260 828 355Q825 368 810 375L635 395Q615 392 620 375Z
M495 470Q460 460 467 430Q475 410 500 408Q505 385 530 387Q555 395 555 415Q590 415 590 445Q585 475 560 470Q540 480 525 470Q510 478 495 470ZM1285 500Q1250 490 1258 460Q1265 440 1290 438Q1295 415 1320 417Q1345 425 1347 445Q1380 445 1382 475Q1375 505 1350 498Q1335 508 1318 500Q1300 508 1285 500Z
M298 385L340 372L350 425L382 428L350 500L335 460L318 465L305 410M770 540L795 565
M290 272H550M265 182L305 208L262 235M415 180Q425 240 415 272M440 180L458 228M470 180V205M470 240V270M525 180L515 272M500 180L515 215L498 235L515 250M55 180Q85 190 110 180M675 180Q730 215 775 180
M343 570L365 562M460 545Q480 540 482 550L470 558M225 620Q230 600 248 610M455 600L490 615Q500 605 480 600L462 590M75 534Q60 590 0 592M130 534L122 580L95 624M122 580L155 624M600 620L690 615L700 624
M968 624Q990 545 1085 547Q1170 570 1190 624M1022 570L1055 550L1105 552L1118 590L1070 610L1030 590ZM1085 547Q1150 545 1205 520Q1200 540 1185 555Q1170 580 1195 585Q1260 575 1310 552Q1290 600 1225 624M1298 624Q1350 615 1352 570Q1365 610 1405 620M1558 490V560
M45 954Q30 1000 50 1035Q75 1045 80 1010Q80 970 70 954M75 954Q110 1020 110 1125M100 954Q160 1010 165 1130M120 954Q125 985 140 954M0 1030Q30 1000 42 954M0 1102Q50 1100 78 1135M5 1200Q40 1130 130 1128Q230 1135 300 1252H0M175 1252Q130 1360 50 1419M80 1285L105 1255M0 1335L30 1322
M245 985Q260 1025 305 1030Q265 1045 262 1092Q245 1050 205 1047Q245 1030 245 985ZM295 954Q370 1020 440 954M500 954Q512 972 525 954
M330 1215Q310 1180 330 1140Q340 1090 365 1055Q390 1020 445 1015Q510 1010 528 1045Q570 1060 572 1100Q600 1130 590 1165Q575 1195 555 1190Q545 1160 555 1145Q510 1130 460 1140L435 1165Q410 1170 408 1190L375 1220Q345 1215 330 1215M365 1058L435 1160M440 1015L460 1145M528 1045L510 1140M330 1140L410 1190M572 1100L550 1140M335 1215Q340 1265 395 1275Q415 1260 400 1250Q375 1240 380 1220
M730 988L690 1045L745 1090Q760 1100 775 1085L792 1055Q795 1035 785 1025Z
M862 960L890 980L868 1005Q875 1020 885 1015L900 1000L915 1020Q935 1015 930 1005L920 985L950 965
M1060 965Q1080 960 1083 975L1085 1000L1115 990Q1125 1000 1118 1015L1090 1025L1098 1060Q1085 1070 1075 1065L1065 1030L1035 1032Q1022 1020 1030 1005L1060 1000Z
M1280 954L1283 975Q1340 1005 1405 1002L1425 954M1165 1100L1205 1133L1172 1173L1135 1140Z
M1323 1125L1370 1108L1378 1155L1410 1160L1378 1238L1362 1200L1345 1203Z
M662 1193Q645 1185 648 1165Q655 1150 670 1150H705Q715 1150 712 1170L708 1230Q695 1248 685 1230V1155M662 1193H685
M1160 1300L1205 1262L1240 1300L1195 1348Q1190 1350 1155 1310ZM1160 1295Q1140 1265 1155 1250Q1175 1240 1180 1275
M820 1165Q800 1100 850 1085Q890 1080 908 1118Q920 1060 970 1063Q1005 1075 1005 1118Q1060 1105 1075 1145Q1080 1170 1065 1185Q1105 1200 1100 1240Q1090 1280 1055 1285Q1080 1330 1040 1350M820 1165Q770 1160 763 1200Q765 1235 795 1240Q755 1290 775 1320Q800 1340 825 1330Q820 1380 855 1380M858 1270Q840 1180 890 1155Q940 1130 980 1165Q1005 1200 1000 1250M865 1230Q870 1180 930 1172Q990 1180 1000 1250Q985 1330 935 1335Q870 1330 865 1230M870 1270Q845 1265 845 1290Q850 1315 875 1300M1000 1240Q1025 1235 1027 1260Q1020 1285 1000 1272M888 1235Q890 1225 905 1218M950 1210Q965 1205 970 1215M920 1265Q935 1275 945 1262M948 1290Q965 1285 968 1272M905 1330V1355L830 1419M905 1360L875 1365M905 1360L950 1395L985 1340M985 1325Q1000 1345 1020 1340L1130 1415L1100 1265
M765 1288L550 1330Q530 1340 532 1360L540 1419M708 1305L725 1419M563 1352L585 1375M585 1352L563 1378M215 1419Q300 1330 385 1320Q395 1370 385 1419M385 1322L320 1419
M1568 1155Q1530 1190 1545 1260L1568 1275M1568 1290L1510 1345L1530 1360L1568 1310M1365 1400Q1440 1320 1500 1340Q1540 1370 1535 1419M1340 1419L1365 1400M1400 1395L1420 1410`,
  },
]

function Wallpaper() {
  return (
    <svg
      aria-hidden="true"
      viewBox="0 0 1131 1753"
      preserveAspectRatio="xMidYMin slice"
      className="absolute inset-0 h-full w-full"
      fill="none"
      stroke="#20262a"
      strokeWidth="2.4"
      strokeLinejoin="round"
      strokeLinecap="round"
    >
      <defs>
        <radialGradient id="face" cx="0.68" cy="0.26" r="0.82">
          <stop offset="0" stopColor="#fdf096" />
          <stop offset="0.4" stopColor="#fddd62" />
          <stop offset="0.75" stopColor="#fcb42c" />
          <stop offset="1" stopColor="#f28c1c" />
        </radialGradient>
        <linearGradient id="tear" x1="0" y1="0" x2="0" y2="1">
          <stop offset="0" stopColor="#b4f0f6" />
          <stop offset="1" stopColor="#2fb0d6" />
        </linearGradient>
        <radialGradient id="pig-skin" cx="0.45" cy="0.3" r="0.75">
          <stop offset="0" stopColor="#ffd0bd" />
          <stop offset="0.6" stopColor="#fcae9b" />
          <stop offset="1" stopColor="#e98576" />
        </radialGradient>
      </defs>

      {sheets.map((sheet) => (
        <g key={`${sheet.x}-${sheet.y}`} transform={`translate(${sheet.x} ${sheet.y})`}>
          {sheet.dots.map(([x, y, r]) => (
            <circle key={`${x}-${y}-${r}`} cx={x / GRID_X} cy={y / GRID_Y} r={r / GRID_Y - 1} />
          ))}
          <path
            d={sheet.lines}
            transform={`scale(${1 / GRID_X} ${1 / GRID_Y})`}
            vectorEffect="non-scaling-stroke"
          />
        </g>
      ))}

      <g stroke="none" fill="#20262a" fontFamily="Open Sans, sans-serif" fontSize="28">
        <text x="228" y="932" transform="rotate(10 228 932)">a</text>
        <text x="350" y="914" transform="rotate(10 350 914)">j</text>
        <text x="417" y="928" transform="rotate(10 417 928)">m</text>
      </g>
      <text
        x="91"
        y="549"
        transform="rotate(-13 91 549)"
        fontFamily="Roboto, sans-serif"
        fontSize="52"
        fontWeight="700"
      >
        24
      </text>
    </svg>
  )
}

function Rofl({ className }: { className: string }) {
  return (
    <svg role="img" aria-label="🤣" viewBox="21 37 252 252" className={className}>
      <circle cx="147" cy="163" r="123" fill="url(#face)" />
      <path
        fill="#7a4706"
        d="M108 102Q130 108 148 103Q150 88 147 75Q152 72 156 80Q163 100 157 118Q150 123 140 119Q120 113 108 102ZM240 160Q220 155 206 163Q207 182 213 198Q205 200 200 192Q188 170 192 155Q195 148 208 150Q225 150 240 160Z"
      />
      <path fill="#753f06" d="M90 100Q58 140 69 185Q88 235 140 243Q190 245 214 214Q150 186 90 100Z" />
      <path fill="#f3ece8" d="M90 110Q78 120 80 130Q130 200 190 235Q202 230 208 216Q150 188 90 110Z" />
      <path fill="#f07a83" d="M78 186Q98 178 118 205Q130 224 123 230Q96 228 78 186Z" />
      <path fill="url(#tear)" d="M97 92Q75 108 50 106Q30 100 30 80Q35 62 58 62Q75 65 97 92Z" />
      <path
        fill="url(#tear)"
        d="M217 210Q245 225 253 250Q252 275 232 277Q212 275 208 255Q206 235 217 210Z"
      />
    </svg>
  )
}

function Pig() {
  return (
    <svg role="img" aria-label="🐖" viewBox="0 0 333 420" className="h-[140px] w-[111px]">
      <path fill="#e58f80" d="M316 300L333 295V370Q318 366 317 355Z" />
      <path
        fill="#f7a492"
        d="M262 112Q300 95 333 105V300Q305 308 287 300L280 375Q275 392 250 388Q228 388 231 370L238 300L207 295L202 362Q198 383 168 378Q150 375 153 355L163 255Z"
      />
      <path fill="#fcc8b8" d="M275 125Q300 105 333 112V190Q300 200 280 185Z" />
      <path fill="#d97d72" d="M175 262Q230 270 268 225L262 250Q240 285 205 293L170 282Z" />
      <path fill="#f5a592" d="M48 66Q100 60 130 70L72 135Q50 110 48 66ZM222 72Q270 60 298 65Q298 115 270 142Z" />
      <path fill="#d9778c" d="M54 74Q80 85 90 100L72 130Q56 108 54 74ZM292 70Q262 85 240 105L268 138Q292 110 292 70Z" />
      <ellipse cx="171" cy="168" rx="106" ry="101" fill="url(#pig-skin)" />
      <ellipse cx="107" cy="158" rx="16" ry="20" fill="#262c2c" />
      <ellipse cx="204" cy="160" rx="16" ry="20" fill="#262c2c" />
      <circle cx="104" cy="149" r="5" fill="#9aa5a5" />
      <circle cx="202" cy="151" r="5" fill="#9aa5a5" />
      <rect x="103" y="175" width="90" height="68" rx="33" fill="#dc7c8e" />
      <ellipse cx="123" cy="206" rx="7" ry="9" fill="#6f2434" />
      <ellipse cx="160" cy="206" rx="7" ry="9" fill="#6f2434" />
      <path stroke="#7a3b35" strokeWidth="3" d="M176 368V378M250 376V388" />
    </svg>
  )
}

function ReadTicks() {
  return (
    <svg
      role="img"
      aria-label="Leído"
      viewBox="0 0 50 32"
      className="mb-6 ml-[11px] h-8 w-[50px] shrink-0"
      fill="none"
      stroke="#58bbe2"
      strokeWidth="4.4"
    >
      <path d="M2 19L12 29L33 2M22 23L28 29L49 2" />
    </svg>
  )
}

function Scribble() {
  return (
    <svg
      aria-hidden="true"
      viewBox="0 0 1020 570"
      className="absolute -top-[66px] -left-[29px] h-[190px] w-[340px]"
    >
      <path
        fill="#ff0000"
        d="M65 292L105 290Q150 225 230 205L315 195Q320 175 340 178L410 190L445 192L495 145L512 55Q515 42 535 42Q555 42 555 60L550 115Q572 115 572 135V165L950 208Q975 210 973 235Q972 258 950 258L955 272Q980 280 978 300Q970 322 945 320L905 315L912 325L955 330Q970 340 968 355Q960 375 940 380Q940 400 915 410Q915 425 895 430Q898 455 880 466H830Q800 475 600 487Q530 492 470 485L395 512Q370 518 350 514L318 490L308 472H145Q125 468 126 432Q100 430 101 400Q98 370 92 350L70 348Q42 340 42 318Q45 292 65 292Z"
      />
      <path
        fill="#144d37"
        d="M178 291Q230 245 395 240Q390 270 372 291ZM775 388L800 376H855Q878 385 878 415L840 402L825 408L795 406ZM158 356L175 360V367Z"
      />
      <path fill="#3c3a22" d="M660 226L720 230L880 249L955 258V270L880 259L710 241Z" />
      <path fill="#3c3a22" d="M906 312L950 320L958 328L915 326Z" />
      <path
        fill="#ffffff"
        d="M758 395L778 385Q780 400 800 405L822 396L832 408L800 409L762 400ZM783 372H833V375H783ZM845 390L856 388Q865 408 880 416L865 419L848 405Z"
      />
      <path fill="#c9a58a" d="M232 290H248V292H232ZM332 290H348V292H332Z" />
    </svg>
  )
}

function Tail() {
  return (
    <svg aria-hidden="true" viewBox="0 0 22 32" className="absolute top-0 -left-[21px] h-8 w-[22px]">
      <path fill="#1f272a" d="M22 0H4Q-2 2 1 8L22 32Z" />
    </svg>
  )
}

interface BubbleProps {
  time: string
  children?: ReactNode
  first?: boolean
}

function Received({ time, children, first }: BubbleProps) {
  return (
    <li
      className={clsx(
        'relative ml-[51px] flex items-end self-start bg-[#1f272a] pt-5 pr-[60px] pl-[43px]',
        first ? 'mt-[30px] rounded-[36px] rounded-tl-none' : 'mt-2 rounded-[36px]',
      )}
    >
      {first && <Tail />}
      <p className="mb-[23px] text-[57px] leading-[67px] text-[#f7f9fc]">{children}</p>
      <time className="mb-2 ml-10 text-[45px] leading-[52px] text-[#a4a7a9]">{time}</time>
    </li>
  )
}

interface SentProps extends BubbleProps {
  emoji?: boolean
}

function Sent({ time, children, first, emoji }: SentProps) {
  return (
    <li
      className={clsx(
        'relative flex items-end self-end rounded-l-[36px] bg-[#144d37] pr-3 pl-[42px]',
        first ? 'mt-[30px]' : 'mt-2',
        emoji ? 'pt-[29px]' : 'pt-5',
      )}
    >
      {emoji ? (
        <div className="mb-[31px] flex">{children}</div>
      ) : (
        <p className="mb-[23px] flex text-[57px] leading-[67px] text-[#f4fffb]">{children}</p>
      )}
      <time className="mb-[11px] ml-[23px] text-[45px] leading-[52px] text-[#a0b8ae]">{time}</time>
      <ReadTicks />
    </li>
  )
}

export default function App() {
  return (
    <main
      className="relative min-h-screen overflow-hidden bg-[#0a0f13] whitespace-nowrap"
      style={{ fontFamily: 'Roboto, sans-serif' }}
    >
      <Wallpaper />

      <ul className="relative -mt-11 flex flex-col pb-[15px]">
        <Received time="17:59" first>
          Sí
        </Received>

        <Sent time="17:59" first>
          <span className="w-[251px]" />
          un puerco
          <Scribble />
        </Sent>
        <Sent time="17:59" emoji>
          {[0, 1, 2].map((n) => (
            <Rofl key={n} className="mr-1 ml-px size-[84px]" />
          ))}
        </Sent>

        <li className="mt-[42px] -mb-[5px] flex flex-col items-end">
          <Pig />
          <div className="mt-2 -mr-7 flex items-end rounded-[38px] bg-[#144d37] pt-[18px] pr-3.5 pl-6">
            <time className="mb-[11px] text-[45px] leading-[52px] text-[#a0b8ae]">17:59</time>
            <ReadTicks />
          </div>
        </li>

        <Received time="17:59" first>
          Pero la tiene bien
        </Received>

        <Sent time="17:59" first>
          Hombre esonsi
        </Sent>
        <Sent time="17:59" emoji>
          {[0, 1, 2, 3, 4].map((n) => (
            <Rofl key={n} className="mr-1 ml-px size-20" />
          ))}
        </Sent>

        <Received time="17:59" first>
          Pues eso
        </Received>
        <Received time="17:59">No es para enamorarme</Received>
        <Received time="18:00">Es para lo q es</Received>

        <Sent time="18:00" first>
          Te va a reventar
        </Sent>

        <Received time="18:00" first>
          No lo creo
        </Received>
      </ul>
    </main>
  )
}
